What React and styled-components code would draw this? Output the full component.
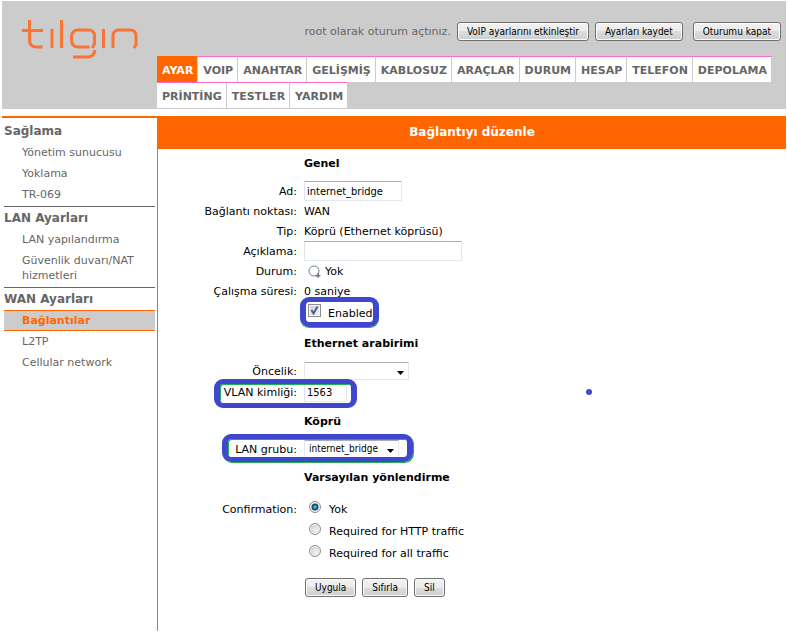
import React, { useState } from "react";
import styled, { createGlobalStyle, css } from "styled-components";

const ORANGE = "#ff6600";
const GREY = "#cccccc";
const TEXT_GREY = "#666666";
const MARKER_BLUE = "#3f48cc";
const MARKER_GREEN = "#22b14c";

const GlobalStyle = createGlobalStyle`
  * {
    box-sizing: border-box;
  }

  body {
    margin: 1px 1px 0 2px;
    background: #fff;
    color: #000;
    font-family: Verdana, "DejaVu Sans", sans-serif;
    font-size: 11px;
  }

  button,
  input,
  select {
    margin: 0;
    color: #000;
    font-family: Tahoma, "DejaVu Sans Condensed", sans-serif;
    font-size: 10px;
  }
`;

const Header = styled.header`
  display: grid;
  grid-template-columns: 155px 1fr;
  padding-bottom: 1px;
  background: ${GREY};
`;

const LogoLink = styled.a`
  padding: 18px 0 0 18px;
`;

const UserBar = styled.div`
  display: flex;
  align-items: center;
  justify-content: flex-end;
  gap: 6px;
  height: 55px;
  padding: 6px 5px 0 0;
  color: ${TEXT_GREY};
`;

const LogoutForm = styled.div`
  padding-left: 4px;
`;

const Button = styled.button`
  height: 19px;
  padding: 0 9px;
  border: 1px solid #707070;
  border-radius: 3px;
  background: linear-gradient(#f2f2f2 0%, #ebebeb 50%, #dddddd 50%, #cfcfcf 100%);
  box-shadow: inset 0 0 0 1px #fafafa;
  line-height: 15px;
  white-space: nowrap;
`;

const Nav = styled.nav`
  display: flex;
  flex-wrap: wrap;
  padding-right: 14px;
`;

const Tab = styled.a`
  height: 26px;
  padding: 0 4px 0 5px;
  border-top: 1px solid ${({ $active }) => ($active ? ORANGE : "#ff66cc")};
  border-right: 1px solid ${GREY};
  background: ${({ $active }) => ($active ? ORANGE : "#fff")};
  color: ${({ $active }) => ($active ? "#fff" : TEXT_GREY)};
  font-weight: bold;
  line-height: 27px;
  text-decoration: none;
`;

const Body = styled.div`
  display: grid;
  grid-template-columns: 155px 1fr;
  margin-top: 7px;
`;

const Sidebar = styled.aside`
  padding: 2px 2px 0;
  border-top: 2px solid ${ORANGE};
`;

const MenuSection = styled.section`
  padding-bottom: 1px;

  & + & {
    border-top: 1px solid ${TEXT_GREY};
  }
`;

const MenuTitle = styled.h2`
  margin: 0;
  color: ${TEXT_GREY};
  font-size: 12px;
  line-height: 22px;
`;

const MenuItem = styled.a`
  display: block;
  padding: 3px 0 3px 18px;
  color: ${TEXT_GREY};
  line-height: 15px;
  text-decoration: none;

  ${({ $active }) =>
    $active &&
    css`
      padding-top: 2px;
      padding-bottom: 2px;
      border-top: 1px solid ${ORANGE};
      border-bottom: 1px solid ${ORANGE};
      background: ${GREY};
      color: ${ORANGE};
      font-weight: bold;
    `}
`;

const Content = styled.main`
  padding-bottom: 34px;
  border-left: 1px solid ${ORANGE};
`;

const PageTitle = styled.h1`
  margin: 0;
  background: ${ORANGE};
  color: #fff;
  font-size: 12px;
  line-height: 33px;
  text-align: center;
`;

const Form = styled.form`
  position: relative;
  padding-top: 5px;
`;

const SectionTitle = styled.h2`
  margin: 0 0 7px 146px;
  font-size: 11px;
  line-height: 20px;

  * + & {
    margin-top: 9px;
  }
`;

const Row = styled.div`
  position: relative;
  display: grid;
  grid-template-columns: 139px 1fr;
  column-gap: 7px;
  align-items: center;
  min-height: ${({ $height = 20 }) => $height}px;
`;

const Label = styled.label`
  text-align: right;
`;

const Value = styled.div`
  grid-column: 2;
  display: flex;
  align-items: center;
`;

const StatusIcon = styled.svg`
  margin: 0 4px;
`;

const TextInput = styled.input`
  width: ${({ $width }) => $width}px;
  height: 20px;
  padding: 0 2px;
  border: 1px solid #e3e9ef;
  border-top-color: #abadb3;
  border-left-color: #e2e3ea;
  border-radius: 1px;
  background: #fff;
  font-size: 11px;
`;

const Select = styled.select`
  appearance: none;
  width: ${({ $width }) => $width}px;
  height: 18px;
  padding: 0 14px 0 4px;
  border: 1px solid #e3e9ef;
  border-top-color: #abadb3;
  border-radius: 1px;
  background: #fff
    url("data:image/svg+xml,%3Csvg xmlns='http://www.w3.org/2000/svg' width='7' height='4'%3E%3Cpath d='M0 0h7L3.500 4z'/%3E%3C/svg%3E")
    no-repeat right 4px top 8px;
  line-height: 16px;
`;

const Option = styled.label`
  display: flex;
  align-items: center;
  gap: 7px;
  padding-left: 4px;
`;

const OptionGroup = styled.div`
  padding-top: 3px;
`;

const Checkbox = styled.input`
  appearance: none;
  width: 13px;
  height: 13px;
  margin-bottom: 5px;
  border: 1px solid #8e8f8f;
  background: linear-gradient(135deg, #cbcfd5, #f6f6f6);
  box-shadow: inset 0 0 0 1px #f4f4f4;

  &:checked {
    background:
      url("data:image/svg+xml,%3Csvg xmlns='http://www.w3.org/2000/svg' width='11' height='11'%3E%3Cpath d='M2.500 5l2 3.500L8.500 1.500' fill='none' stroke='%234b5f97' stroke-width='2'/%3E%3C/svg%3E"),
      linear-gradient(135deg, #cbcfd5, #f6f6f6);
  }
`;

const Radio = styled.input`
  appearance: none;
  width: 12px;
  height: 12px;
  margin: 0 1px 4px;
  border: 1px solid #8e8f8f;
  border-radius: 50%;
  background: radial-gradient(circle at 65% 65%, #f2f2f2, #c4c8cc);
  box-shadow: inset 0 0 0 1px #f4f4f4;

  &:checked {
    background: radial-gradient(circle, #6fd0f5 0, #1c6fa5 2px, #12344f 3px, #dfe5ea 4px);
  }
`;

const ButtonRow = styled.div`
  display: flex;
  gap: 6px;
  margin: 14px 0 0 147px;
`;

// Pen mark laid over the row that it is placed in.
const Marker = styled.span`
  position: absolute;
  top: ${({ $top }) => $top}px;
  left: ${({ $left }) => $left}px;
  width: ${({ $width }) => $width}px;
  height: ${({ $height }) => $height}px;
  border: 5px solid ${MARKER_BLUE};
  border-width: 5px 6px;
  border-radius: 9px;
  box-shadow: ${({ $shadow }) => $shadow};
  pointer-events: none;
`;

const Dot = styled.span`
  position: absolute;
  top: 240px;
  left: 428px;
  width: 6px;
  height: 6px;
  border-radius: 3px;
  background: ${MARKER_BLUE};
`;

const tabs = [
  "AYAR",
  "VOIP",
  "ANAHTAR",
  "GELİŞMİŞ",
  "KABLOSUZ",
  "ARAÇLAR",
  "DURUM",
  "HESAP",
  "TELEFON",
  "DEPOLAMA",
  "PRİNTİNG",
  "TESTLER",
  "YARDIM",
];

const menu = [
  { title: "Sağlama", items: ["Yönetim sunucusu", "Yoklama", "TR-069"] },
  {
    title: "LAN Ayarları",
    items: ["LAN yapılandırma", "Güvenlik duvarı/NAT hizmetleri"],
  },
  { title: "WAN Ayarları", items: ["Bağlantılar", "L2TP", "Cellular network"] },
];

const confirmations = [
  "Yok",
  "Required for HTTP traffic",
  "Required for all traffic",
];

function Logo() {
  return (
    <svg
      width="120"
      height="42"
      viewBox="0 0 120 42"
      fill="none"
      stroke="#fa7436"
      strokeWidth="3"
      role="img"
      aria-label="tilgin"
    >
      <path d="M9.500 1v20q0 7 7 7h6M2 11.500h21" />
      <path d="M32 10v19M41.500 1v28" />
      <path d="M74.500 26V17q0-6-6-6h-10q-7 0-7 7v3q0 7 7 7h11M74.500 24l-2 5" />
      <path d="M75 31q-1 7-7 7H53" />
      <path d="M83.500 10v19" />
      <path d="M93 29V17q0-6 6-6h11q6 0 6 6v9l-2 3" />
    </svg>
  );
}

function ConnectionForm() {
  const [name, setName] = useState("internet_bridge");
  const [description, setDescription] = useState("");
  const [enabled, setEnabled] = useState(true);
  const [vlan, setVlan] = useState("1563");
  const [confirmation, setConfirmation] = useState("Yok");

  return (
    <Form onSubmit={(e) => e.preventDefault()}>
      <SectionTitle>Genel</SectionTitle>
      <Row>
        <Label htmlFor="name">Ad:</Label>
        <TextInput
          id="name"
          $width={98}
          value={name}
          onChange={(e) => setName(e.target.value)}
        />
      </Row>
      <Row>
        <Label as="span">Bağlantı noktası:</Label>
        <Value>WAN</Value>
      </Row>
      <Row>
        <Label as="span">Tip:</Label>
        <Value>Köprü (Ethernet köprüsü)</Value>
      </Row>
      <Row>
        <Label htmlFor="description">Açıklama:</Label>
        <TextInput
          id="description"
          $width={158}
          value={description}
          onChange={(e) => setDescription(e.target.value)}
        />
      </Row>
      <Row>
        <Label as="span">Durum:</Label>
        <Value>
          <StatusIcon width="13" height="13" viewBox="0 0 13 13" aria-hidden="true">
            <circle cx="6" cy="6" r="5" fill="#fff" stroke="#708090" />
            <path d="M11 7v3h2l-3 3-3-3h2V9z" fill="#708090" />
          </StatusIcon>
          Yok
        </Value>
      </Row>
      <Row>
        <Label as="span">Çalışma süresi:</Label>
        <Value>0 saniye</Value>
      </Row>
      <Row $height={24}>
        <Value>
          <Option>
            <Checkbox
              type="checkbox"
              checked={enabled}
              onChange={(e) => setEnabled(e.target.checked)}
            />
            Enabled
          </Option>
        </Value>
        <Marker
          $top={-4}
          $left={142}
          $width={79}
          $height={30}
          $shadow={`0 1px 0 ${MARKER_GREEN}`}
        />
      </Row>

      <SectionTitle>Ethernet arabirimi</SectionTitle>
      <Row>
        <Label htmlFor="priority">Öncelik:</Label>
        <Select id="priority" $width={105} defaultValue="">
          <option value=""></option>
        </Select>
      </Row>
      <Row $height={22}>
        <Label htmlFor="vlan">VLAN kimliği:</Label>
        <TextInput
          id="vlan"
          $width={43}
          value={vlan}
          onChange={(e) => setVlan(e.target.value)}
        />
        <Marker
          $top={-2}
          $left={56}
          $width={143}
          $height={29}
          $shadow={`inset 1px 1px 0 ${MARKER_GREEN}`}
        />
      </Row>

      <SectionTitle>Köprü</SectionTitle>
      <Row>
        <Label htmlFor="lan-group">LAN grubu:</Label>
        <Select id="lan-group" $width={95}>
          <option>internet_bridge</option>
        </Select>
        <Marker
          $top={-5}
          $left={64}
          $width={191}
          $height={28}
          $shadow={`1px 1px 0 ${MARKER_GREEN}, inset 1px 1px 0 ${MARKER_GREEN}`}
        />
      </Row>

      <SectionTitle>Varsayılan yönlendirme</SectionTitle>
      <OptionGroup role="radiogroup" aria-labelledby="confirmation-label">
        {confirmations.map((option, i) => (
          <Row key={option} $height={22}>
            {i === 0 && (
              <Label as="span" id="confirmation-label">
                Confirmation:
              </Label>
            )}
            <Value>
              <Option>
                <Radio
                  type="radio"
                  name="confirmation"
                  checked={confirmation === option}
                  onChange={() => setConfirmation(option)}
                />
                {option}
              </Option>
            </Value>
          </Row>
        ))}
      </OptionGroup>

      <ButtonRow>
        <Button type="submit">Uygula</Button>
        <Button type="reset">Sıfırla</Button>
        <Button type="button">Sil</Button>
      </ButtonRow>
      <Dot />
    </Form>
  );
}

export default function App() {
  return (
    <>
      <GlobalStyle />
      <Header>
        <LogoLink href="#">
          <Logo />
        </LogoLink>
        <div>
          <UserBar>
            <span>root olarak oturum açtınız.</span>
            <Button type="button">VoIP ayarlarını etkinleştir</Button>
            <Button type="button">Ayarları kaydet</Button>
            <LogoutForm>
              <Button type="button">Oturumu kapat</Button>
            </LogoutForm>
          </UserBar>
          <Nav>
            {tabs.map((tab) => (
              <Tab key={tab} href="#" $active={tab === "AYAR"}>
                {tab}
              </Tab>
            ))}
          </Nav>
        </div>
      </Header>
      <Body>
        <Sidebar>
          {menu.map(({ title, items }) => (
            <MenuSection key={title}>
              <MenuTitle>{title}</MenuTitle>
              {items.map((item) => (
                <MenuItem key={item} href="#" $active={item === "Bağlantılar"}>
                  {item}
                </MenuItem>
              ))}
            </MenuSection>
          ))}
        </Sidebar>
        <Content>
          <PageTitle>Bağlantıyı düzenle</PageTitle>
          <ConnectionForm />
        </Content>
      </Body>
    </>
  );
}
